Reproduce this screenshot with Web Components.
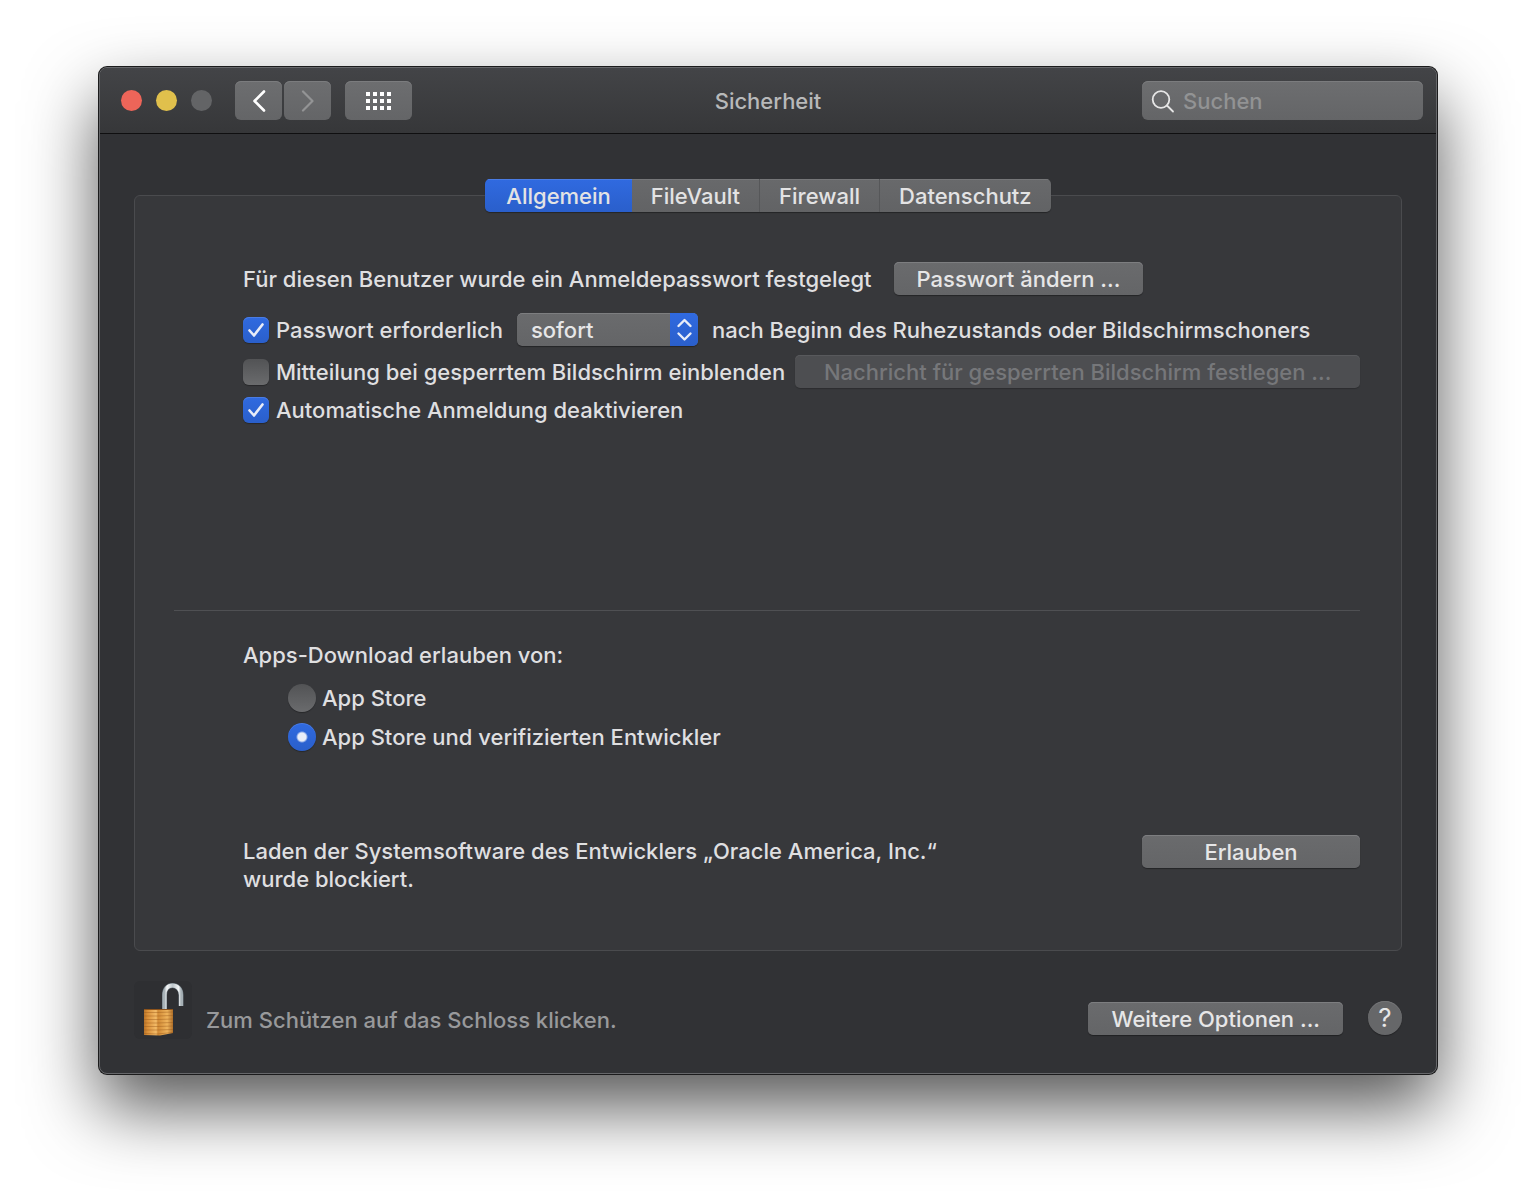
<!DOCTYPE html>
<html lang="de">
<head>
<meta charset="utf-8">
<meta name="viewport" content="width=device-width, initial-scale=1">
<title>Sicherheit</title>
<style>
  body { margin: 0; background: #fff; color: #dfdfe0; font: 450 22px/28px Inter, "Liberation Sans", sans-serif; }
  main { padding: 66px 98px 129px; }
</style>
</head>
<body>
<main>
  <pref-window>
    <pref-toolbar slot="toolbar">Sicherheit</pref-toolbar>
    <pref-tabs></pref-tabs>
    <security-pane></security-pane>
    <pref-footer></pref-footer>
  </pref-window>
</main>

<script>
const define = (name, html, setup) => {
  const template = document.createElement('template');
  template.innerHTML = '<style>*{box-sizing:border-box} button,input,select{font:inherit;color:inherit;margin:0}</style>' + html;
  customElements.define(name, class extends HTMLElement {
    connectedCallback() {
      if (this.shadowRoot) return;
      this.attachShadow({ mode: 'open' }).append(template.content.cloneNode(true));
      if (setup) setup(this, this.shadowRoot);
    }
  });
};

define('pref-window', `
  <style>
    :host { display: block; margin: 1px; border: 1px solid #66676a; border-radius: 8px; overflow: hidden;
      background: #313235; box-shadow: 0 0 0 1px #1b1b1c, 0 33px 70px rgba(0,0,0,.67); }
    .body { padding: 45px 34px 34px; }
  </style>
  <slot name="toolbar"></slot>
  <div class="body"><slot></slot></div>`);

define('pref-toolbar', `
  <style>
    :host { display: grid; grid-template-columns: 1fr auto 1fr; align-items: center; padding: 13px;
      background: linear-gradient(#434447, #363739); border-bottom: 1px solid #0f0f10; }
    h1 { margin: 0; font-size: 22px; font-weight: inherit; color: #b8b9ba; }
    .left, .lights, .nav { display: flex; align-items: center; }
    .lights { gap: 14px; margin: 0 23px 0 8px; }
    .nav { gap: 2px; margin-right: 14px; }
    .light { width: 21px; height: 21px; padding: 0; border: 0; border-radius: 50%; background: #636466; }
    .close { background: #ed6559; }
    .min { background: #e0c04c; }
    .tool { display: grid; place-items: center; width: 47px; height: 39px; padding: 0; border: 0; border-radius: 6px;
      background: linear-gradient(#6d6e70, #646567); box-shadow: inset 0 1px #7b7c7e; color: #fff; }
    .tool:disabled { color: #939495; }
    .grid { width: 67px; }
    .search { justify-self: end; display: flex; align-items: center; gap: 8px; width: 281px; height: 39px; padding: 0 9px;
      border-radius: 6px; background: linear-gradient(#6d6e70, #646567); box-shadow: inset 0 1px #7b7c7e; }
    input { flex: 1; min-width: 0; padding: 0; border: 0; outline: 0; background: none; }
    input::placeholder { color: #929394; opacity: 1; }
  </style>
  <div class="left">
    <div class="lights">
      <button class="light close" aria-label="Schließen"></button>
      <button class="light min" aria-label="Minimieren"></button>
      <button class="light" aria-label="Zoomen" disabled></button>
    </div>
    <div class="nav">
      <button class="tool" aria-label="Zurück"><svg width="14" height="22" viewBox="0 0 14 22" fill="none" stroke="currentColor" stroke-width="2.6" stroke-linecap="round" stroke-linejoin="round"><path d="M12 1.500 2.500 11 12 20.500"/></svg></button>
      <button class="tool" aria-label="Vorwärts" disabled><svg width="14" height="22" viewBox="0 0 14 22" fill="none" stroke="currentColor" stroke-width="2.2" stroke-linecap="round" stroke-linejoin="round"><path d="M2 1.500 11.500 11 2 20.500"/></svg></button>
    </div>
    <button class="tool grid" aria-label="Alle einblenden"><svg width="25" height="18" viewBox="0 0 25 18" fill="#fff"><path d="M0 0h4v4H0zM7 0h4v4H7zM14 0h4v4h-4zM21 0h4v4h-4zM0 7h4v4H0zM7 7h4v4H7zM14 7h4v4h-4zM21 7h4v4h-4zM0 14h4v4H0zM7 14h4v4H7zM14 14h4v4h-4zM21 14h4v4h-4z"/></svg></button>
  </div>
  <h1><slot></slot></h1>
  <label class="search">
    <svg width="24" height="24" viewBox="0 0 24 24" fill="none" stroke="#e6e6e6" stroke-width="1.8" stroke-linecap="round"><circle cx="10" cy="10.500" r="8.300"/><path d="m16 16.500 6 6"/></svg>
    <input type="text" placeholder="Suchen" aria-label="Suchen">
  </label>`);

define('pref-tabs', `
  <style>
    :host { display: flex; justify-content: center; position: relative; z-index: 1; }
    div { display: flex; border-radius: 5px; overflow: hidden; box-shadow: 0 1px 1px rgba(0,0,0,.35); }
    button { height: 33px; padding: 0 19px; border: 0; border-left: 1px solid #565759;
      background: linear-gradient(#68696b, #626365); color: #e3e3e4; box-shadow: inset 0 1px #757678; }
    button[aria-selected=true] { padding: 0 21px; border: 0; background: linear-gradient(#306ae0, #2a5fcb); box-shadow: inset 0 1px #4a7ce4; }
    button[aria-selected=true] + button { border: 0; }
  </style>
  <div role="tablist">
    <button role="tab" aria-selected="true">Allgemein</button>
    <button role="tab" aria-selected="false">FileVault</button>
    <button role="tab" aria-selected="false">Firewall</button>
    <button role="tab" aria-selected="false">Datenschutz</button>
  </div>`, (host, root) => {
    const tabs = root.querySelectorAll('button');
    tabs.forEach(t => t.addEventListener('click', () => tabs.forEach(o => o.setAttribute('aria-selected', o === t))));
  });

define('push-button', `
  <style>
    :host { display: block; }
    button { display: block; width: 100%; height: 33px; padding: 0 23px; border: 0; border-radius: 5px; white-space: nowrap;
      background: linear-gradient(#6a6b6d, #646567); color: #e6e6e7; box-shadow: inset 0 1px #7d7e80, 0 1px 1px rgba(0,0,0,.35); }
    button:disabled { background: #4d4e51; color: #76777a; box-shadow: inset 0 1px #58595c, 0 1px 1px rgba(0,0,0,.2); }
  </style>
  <button><slot></slot></button>`, (host, root) => {
    root.querySelector('button').disabled = host.hasAttribute('disabled');
  });

define('check-option', `
  <style>
    :host { display: block; }
    label { display: flex; align-items: center; gap: 7px; line-height: 26px; white-space: nowrap; }
    .box { display: grid; flex: none; }
    .box > * { grid-area: 1 / 1; }
    input { appearance: none; width: 26px; height: 26px; border-radius: 6px; background: linear-gradient(#525355, #6a6b6d);
      box-shadow: 0 1px 1px rgba(0,0,0,.3); }
    input:checked { background: linear-gradient(#306ae0, #2a5fcb); box-shadow: inset 0 1px #4a7ce4, 0 1px 1px rgba(0,0,0,.3); }
    svg { display: none; pointer-events: none; }
    input:checked + svg { display: block; }
  </style>
  <label><span class="box"><input type="checkbox"><svg width="26" height="26" viewBox="0 0 26 26" fill="none" stroke="#e9edf8" stroke-width="2.6" stroke-linecap="round" stroke-linejoin="round"><path d="m6.500 13.500 4.500 5L19.500 7.500"/></svg></span><span><slot></slot></span></label>`, (host, root) => {
    root.querySelector('input').checked = host.hasAttribute('checked');
  });

define('popup-select', `
  <style>
    :host { display: grid; width: 181px; height: 33px; border-radius: 5px; overflow: hidden; box-shadow: 0 1px 1px rgba(0,0,0,.35); }
    select, svg { grid-area: 1 / 1; }
    select { appearance: none; width: 100%; height: 33px; padding: 0 42px 0 14px; border: 0; border-radius: 5px;
      background: linear-gradient(#6a6b6d, #646567); color: #e6e6e7; box-shadow: inset 0 1px #7d7e80; }
    option { color: #e6e6e7; background: #37383b; }
    svg { justify-self: end; pointer-events: none; background: linear-gradient(#306ae0, #2a5fcb); }
  </style>
  <select aria-label="Passwort erforderlich"><option>sofort</option></select>
  <svg width="28" height="33" viewBox="0 0 28 33" fill="none" stroke="#e9edf8" stroke-width="2.400" stroke-linecap="round" stroke-linejoin="round"><path d="m8.500 13 6-6 6 6M8.500 20.500l6 6 6-6"/></svg>`);

define('source-options', `
  <style>
    :host { display: block; }
    fieldset { display: flex; flex-direction: column; gap: 11px; margin: 0; padding: 0 0 0 45px; border: 0; min-width: 0; }
    legend { margin-left: -45px; padding: 0 0 15px; }
    label { display: flex; align-items: center; gap: 6px; }
    input { appearance: none; width: 28px; height: 28px; border-radius: 50%; background: linear-gradient(#525355, #6a6b6d);
      box-shadow: 0 1px 1px rgba(0,0,0,.3); }
    input:checked { background: radial-gradient(circle, #e9edf8 4px, transparent 6px), linear-gradient(#306ae0, #2a5fcb);
      box-shadow: inset 0 1px #4a7ce4, 0 1px 1px rgba(0,0,0,.3); }
  </style>
  <fieldset>
    <legend>Apps-Download erlauben von:</legend>
    <label><input type="radio" name="source">App Store</label>
    <label><input type="radio" name="source" checked>App Store und verifizierten Entwickler</label>
  </fieldset>`);

define('security-pane', `
  <style>
    :host { display: block; margin-top: -17px; padding: 66px 41px 57px 108px; border: 1px solid #4a4b4e; border-radius: 6px; background: #37383b; }
    .rows { display: flex; flex-direction: column; gap: 9px; }
    .row { display: flex; align-items: center; height: 33px; white-space: nowrap; }
    .password { gap: 22px; margin-bottom: 9px; }
    .require { gap: 14px; }
    .message { gap: 10px; }
    .message push-button { flex: 1; }
    hr { height: 1px; margin: 187px 0 30px -69px; border: 0; background: #4f5053; }
    .blocked { display: flex; justify-content: space-between; margin-top: 84px; }
    p { margin: 2px 0 0; }
    .allow { width: 218px; }
  </style>
  <div class="rows">
    <div class="row password"><span>Für diesen Benutzer wurde ein Anmeldepasswort festgelegt</span><push-button>Passwort ändern ...</push-button></div>
    <div class="row require"><check-option checked>Passwort erforderlich</check-option><popup-select></popup-select><span>nach Beginn des Ruhezustands oder Bildschirmschoners</span></div>
    <div class="row message"><check-option>Mitteilung bei gesperrtem Bildschirm einblenden</check-option><push-button disabled>Nachricht für gesperrten Bildschirm festlegen ...</push-button></div>
    <check-option checked>Automatische Anmeldung deaktivieren</check-option>
  </div>
  <hr>
  <source-options></source-options>
  <div class="blocked">
    <p>Laden der Systemsoftware des Entwicklers „Oracle America, Inc.“<br>wurde blockiert.</p>
    <push-button class="allow">Erlauben</push-button>
  </div>`);

define('pref-footer', `
  <style>
    :host { display: flex; align-items: flex-end; margin-top: 30px; }
    .lock { width: 58px; height: 58px; padding: 0; border: 0; border-radius: 6px; background: #2e2f32; }
    svg { display: block; }
    .hint { padding: 0 0 5px 14px; color: #98999b; }
    .actions { display: flex; align-items: flex-end; gap: 25px; margin-left: auto; padding-bottom: 4px; }
    .help { width: 34px; height: 34px; padding: 0; border: 0; border-radius: 50%; background: #666769; color: #e6e6e7; font-size: 26px; font-weight: 400; box-shadow: inset 0 1px #747577, 0 1px 1px rgba(0,0,0,.3); }
  </style>
  <button class="lock" aria-label="Schloss">
    <svg width="58" height="58" viewBox="0 0 58 58">
      <defs>
        <linearGradient id="brass"><stop offset="0" stop-color="#b8742a"/><stop offset=".12" stop-color="#d98f38"/><stop offset=".42" stop-color="#f3bb68"/><stop offset=".48" stop-color="#d18a35"/><stop offset=".8" stop-color="#efb45c"/><stop offset="1" stop-color="#b0702a"/></linearGradient>
        <linearGradient id="steel"><stop offset="0" stop-color="#a9b3b8"/><stop offset=".15" stop-color="#f6f8f9"/><stop offset=".5" stop-color="#bcc5ca"/><stop offset=".85" stop-color="#f4f6f7"/><stop offset="1" stop-color="#a6b0b5"/></linearGradient>
      </defs>
      <path d="M30.500 29V14C30.500 8 34 4.500 38.500 4.500S47 8 47 14v11" fill="none" stroke="#6d7980" stroke-width="5"/>
      <path d="M30.500 29V14C30.500 8 34 4.500 38.500 4.500S47 8 47 14v11" fill="none" stroke="url(#steel)" stroke-width="4"/>
      <path d="M10 28h29v24l-13 2.500L10 54z" fill="url(#brass)"/>
      <path d="M10 31.500h13l16-.5M10 35h13l16-.5M10 38.500h13l16-.5M10 42h13l16-.5M10 45.500h13l16-.5M10 49h13l16-.5M10 52.500l13 .5 16-1.500" fill="none" stroke="#9c5c1c" stroke-opacity=".45"/>
      <path d="M10 28.500h29" stroke="#8d531b"/>
    </svg>
  </button>
  <span class="hint">Zum Schützen auf das Schloss klicken.</span>
  <div class="actions"><push-button>Weitere Optionen ...</push-button><button class="help" aria-label="Hilfe">?</button></div>`);
</script>
</body>
</html>
